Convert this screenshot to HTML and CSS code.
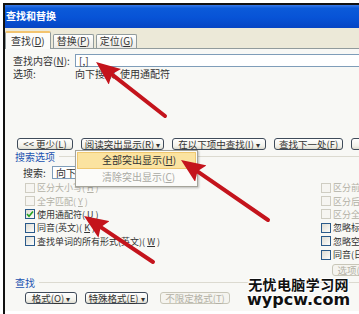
FILE: index.html
```html
<!DOCTYPE html>
<html lang="zh-CN">
<head>
  <meta charset="UTF-8" />
  <title>查找和替换</title>
  <link rel="stylesheet" href="styles.css">
</head>
<body>
  <div class="dialog">
    <div class="titlebar">查找和替换</div>
    <div class="tabs">
      <span class="tab active">查找(<u>D</u>)</span>
      <span class="tab">替换(<u>P</u>)</span>
      <span class="tab">定位(<u>G</u>)</span>
    </div>

    <div class="page">
      <div class="find-row">
        <span class="label">查找内容(<u>N</u>):</span>
        <div class="textbox">[,]</div>
      </div>
      <div class="info-row">
        <span class="label">选项:</span>
        <span>向下搜索, 使用通配符</span>
      </div>

      <div class="btn-row top">
        <span class="btn w56">&lt;&lt; 更少(<u>L</u>)</span>
        <span class="btn w83">阅读突出显示(<u>R</u>) <i class="caret">▾</i></span>
        <span class="btn w94">在以下项中查找(<u>I</u>) <i class="caret">▾</i></span>
        <span class="btn w69">查找下一处(<u>F</u>)</span>
        <span class="btn w50">取消</span>
      </div>

      <div class="group-title">搜索选项</div>
      <div class="search-row">
        <span class="search-label">搜索:</span>
        <div class="select">向下</div>
      </div>

      <div class="options">
        <div class="col">
          <div class="check off"><span class="box"></span>区分大小写(<u>H</u>)</div>
          <div class="check off"><span class="box"></span>全字匹配(<u>Y</u>)</div>
          <div class="check"><span class="box"><svg width="8" height="8" viewBox="0 0 8 8"><path d="M1 4 L3 6.2 L7 1.5" fill="none" stroke="#21a121" stroke-width="1.6"/></svg></span>使用通配符(<u>U</u>)</div>
          <div class="check"><span class="box"></span>同音(英文)(<u>K</u>)</div>
          <div class="check"><span class="box"></span>查找单词的所有形式(英文)(<u>W</u>)</div>
        </div>
        <div class="col">
          <div class="check off"><span class="box"></span>区分前缀(<u>X</u>)</div>
          <div class="check off"><span class="box"></span>区分后缀(<u>T</u>)</div>
          <div class="check off"><span class="box"></span>区分全/半角(<u>M</u>)</div>
          <div class="check"><span class="box"></span>忽略标点符号(<u>S</u>)</div>
          <div class="check"><span class="box"></span>忽略空格(<u>W</u>)</div>
          <div class="check"><span class="box"></span>同音(日文)(<u>J</u>)</div>
          <span class="btn off opt-btn">选项(<u>S</u>)...</span>
        </div>
      </div>

      <div class="group-title">查找</div>
      <div class="btn-row bottom">
        <span class="btn w52">格式(<u>O</u>) <i class="caret">▾</i></span>
        <span class="btn w63">特殊格式(<u>E</u>)<i class="caret">▾</i></span>
        <span class="btn off w70 gap">不限定格式(<u>T</u>)</span>
      </div>
    </div>
  </div>

  <!-- dropdown of the highlight button -->
  <div class="menu">
    <div class="menu-item hover">全部突出显示(<u>H</u>)</div>
    <div class="menu-item off">清除突出显示(<u>C</u>)</div>
  </div>

  <svg class="arrows" width="359" height="314" viewBox="0 0 359 314">
    <defs>
      <marker id="head" markerUnits="userSpaceOnUse" viewBox="0 0 24 20" refX="12" refY="10" markerWidth="24" markerHeight="20" orient="auto">
        <path d="M0,0 L24,10 L0,20 L4,10 z" fill="#c4141c" />
      </marker>
    </defs>
    <line x1="165" y1="116" x2="105.5" y2="69.4" stroke="#c4141c" stroke-width="4" stroke-linecap="round" marker-end="url(#head)" />
    <line x1="268" y1="220" x2="190.9" y2="166.8" stroke="#c4141c" stroke-width="4" stroke-linecap="round" marker-end="url(#head)" />
    <line x1="153" y1="262" x2="94" y2="222.7" stroke="#c4141c" stroke-width="4" stroke-linecap="round" marker-end="url(#head)" />
  </svg>

  <div class="watermark">
    <div class="wm-cn">无忧电脑学习网</div>
    <div class="wm-en">wypcw.com</div>
  </div>
</body>
</html>
```

FILE: styles.css
```css
* {
  box-sizing: border-box;
}
body {
  margin: 0;
  width: 359px;
  height: 314px;
  overflow: hidden;
  position: relative;
  background: #fff;
  font-family: "Noto Sans CJK SC", "Noto Sans", sans-serif;
  font-size: 10px;
  color: #333;
}
u {
  text-decoration: underline;
  text-decoration-thickness: 0.5px;
  text-underline-offset: 1px;
}
i {
  font-style: normal;
}

.dialog {
  margin: 3px 0 0 3px;
  height: 311px;
  border-top: 2px solid #111;
  border-left: 2px solid #111;
  overflow: hidden;
}
.titlebar {
  height: 23px;
  padding-left: 1px;
  line-height: 22px;
  color: #fff;
  font-size: 10px;
  font-weight: bold;
  white-space: nowrap;
  background: linear-gradient(#3a7ae6 0, #0b5ad9 14%, #0753d6 55%, #0645c4 100%);
}

/* tabs */
.tabs {
  height: 21px;
  display: flex;
  align-items: flex-end;
  gap: 2px;
  background: #ece9d8;
  border-bottom: 1px solid #919b9c;
}
.tab {
  height: 14px;
  padding: 0 3px;
  line-height: 12px;
  white-space: nowrap;
  border: 1px solid #919b9c;
  border-bottom: none;
  border-radius: 2px 2px 0 0;
  background: linear-gradient(#fff, #ecebe5);
}
.tab.active {
  height: 18px;
  margin-bottom: -1px;
  padding: 0 5px;
  line-height: 16px;
  background: #fcfcfa;
  border-top: 2px solid #f3c46f;
}

/* tab page */
.page {
  height: 262px;
  padding: 5px 0 0 8px;
  background: #f8f8f5;
}
.find-row {
  height: 13px;
  display: flex;
  align-items: center;
}
.label {
  width: 62px;
  flex: none;
}
.textbox {
  flex: 1;
  height: 13px;
  padding-left: 3px;
  line-height: 11px;
  background: #fff;
  border: 1px solid #7f9db9;
  border-right: none;
}
.info-row {
  height: 12px;
  display: flex;
  align-items: center;
  white-space: nowrap;
}

/* buttons */
.btn-row {
  display: flex;
  gap: 8px;
  white-space: nowrap;
}
.btn-row.top {
  margin: 59px 0 0 4px;
}
.btn-row.bottom {
  margin: 4px 0 0 12px;
}
.btn {
  height: 12px;
  flex: none;
  display: flex;
  align-items: center;
  justify-content: center;
  font-size: 9.5px;
  line-height: 9px;
  border: 1px solid #3f4b5a;
  border-radius: 3px;
  background: linear-gradient(#ffffff, #f2f1ea 70%, #dedcd0);
}
.btn.off {
  color: #b3b1a6;
  border-color: #c8c6b8;
  background: #f5f4ef;
}
.caret {
  margin-left: 2px;
  font-size: 8px;
}
.w50 { width: 50px; }
.w52 { width: 52px; }
.w56 { width: 56px; }
.w63 { width: 63px; }
.w69 { width: 69px; }
.w70 { width: 70px; }
.w83 { width: 83px; }
.w94 { width: 94px; }
.gap {
  margin-left: 4px;
}

/* groups */
.group-title {
  height: 12px;
  margin-left: 2px;
  display: flex;
  align-items: center;
  gap: 4px;
  color: #2152b0;
  white-space: nowrap;
}
.group-title::after {
  content: "";
  flex: 1;
  border-top: 1px solid #dcdad0;
}
.search-row {
  height: 13px;
  margin: 4px 0 0 10px;
  display: flex;
  align-items: center;
}
.search-label {
  width: 29px;
}
.select {
  width: 90px;
  height: 13px;
  padding-left: 3px;
  line-height: 11px;
  background: #fff;
  border: 1px solid #7f9db9;
}

.options {
  margin-top: 2px;
  display: grid;
  grid-template-columns: 308px 1fr;
  height: 95px;
}
.options .col:first-child {
  padding-left: 12px;
}
.check {
  height: 13.4px;
  display: flex;
  align-items: center;
  gap: 2px;
  font-size: 9px;
  white-space: nowrap;
}
.box {
  width: 10px;
  height: 10px;
  flex: none;
  display: flex;
  align-items: center;
  justify-content: center;
  border: 1px solid #2a5a8a;
  background: linear-gradient(135deg, #dedcd3, #fdfdfb);
}
.check.off {
  color: #b3b1a6;
}
.check.off .box {
  border-color: #cfcdc2;
  background: #f6f5f1;
}
.opt-btn {
  width: 50px;
  margin: 3px 0 0 11px;
}

/* dropdown */
.menu {
  position: absolute;
  left: 75px;
  top: 150px;
  width: 123px;
  height: 37px;
  padding: 1px;
  background: #fbfbf9;
  border: 1px solid #a5a49a;
  box-shadow: 1px 1px 2px rgba(0, 0, 0, 0.25);
}
.menu-item {
  height: 17px;
  padding-left: 25px;
  line-height: 16px;
  white-space: nowrap;
}
.menu-item.hover {
  background: #fbe3a0;
  border: 1px solid #f0c870;
  line-height: 14px;
  padding-left: 24px;
}
.menu-item.off {
  color: #a9a9a3;
}

/* overlay */
.arrows {
  position: absolute;
  left: 0;
  top: 0;
  pointer-events: none;
}
.watermark {
  position: absolute;
  left: 247px;
  top: 276px;
  color: #111;
  font-weight: bold;
  text-align: center;
  text-shadow: 1px 0 0 #fff, -1px 0 0 #fff, 0 1px 0 #fff, 0 -1px 0 #fff, 1px 1px 1px #fff, -1px -1px 1px #fff;
}
.wm-cn {
  font-size: 14px;
  line-height: 16px;
  letter-spacing: 0.4px;
}
.wm-en {
  font-family: "DejaVu Sans", sans-serif;
  font-size: 16px;
  line-height: 15px;
}
```
